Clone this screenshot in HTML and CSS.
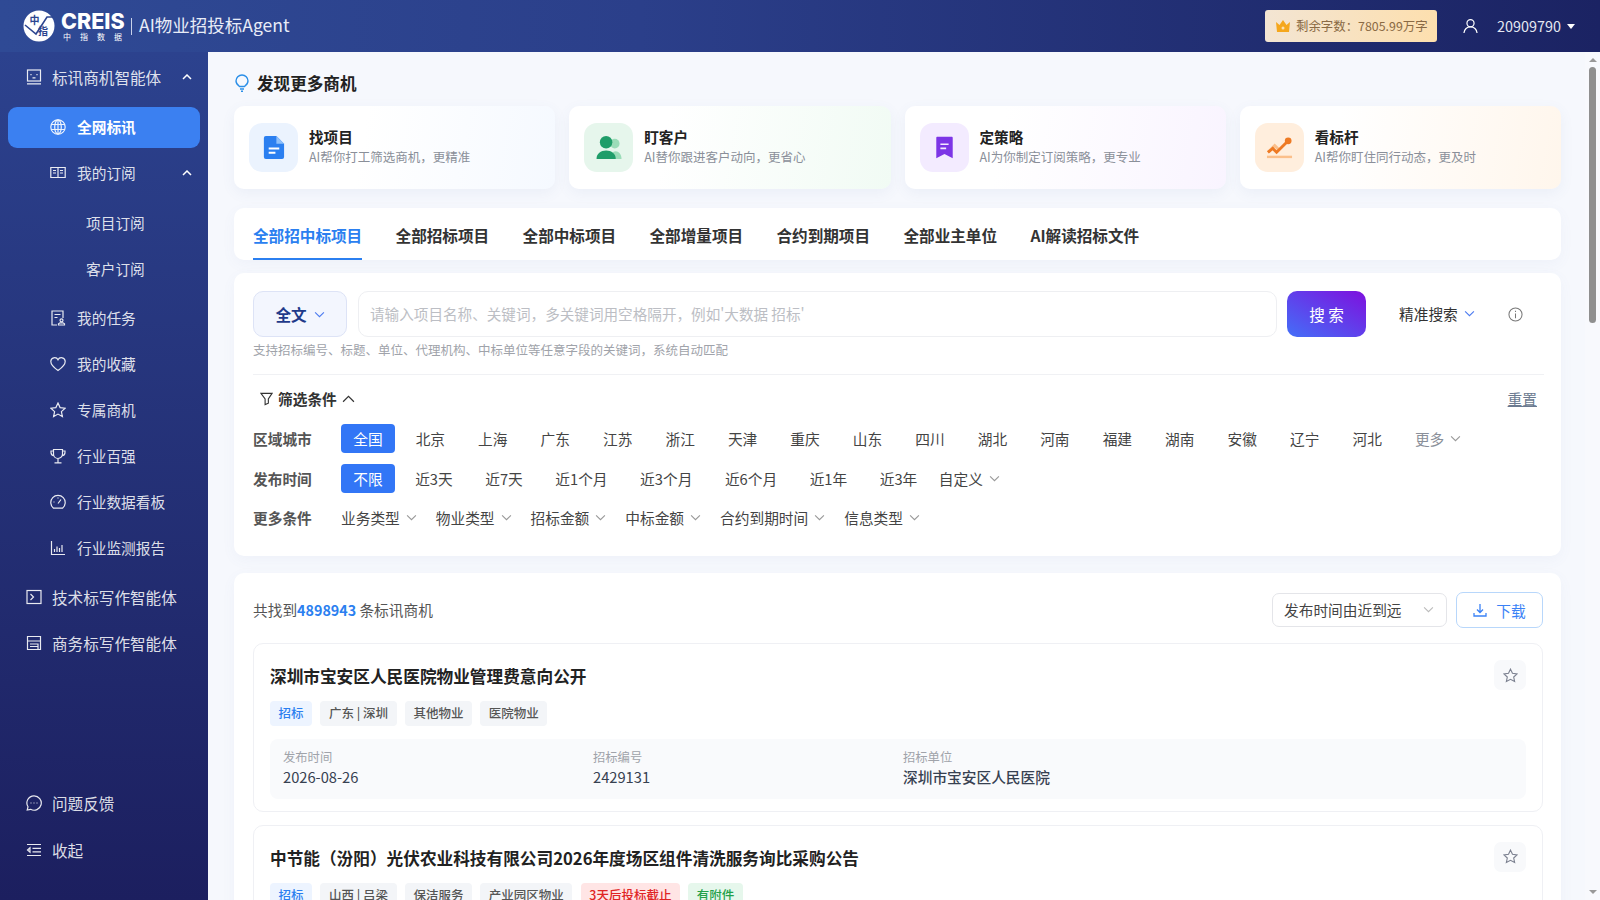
FILE: index.html
```html
<!DOCTYPE html>
<html lang="zh-CN">
<head>
  <meta charset="UTF-8" />
  <title>AI物业招投标Agent</title>
  <link rel="stylesheet" href="styles.css">
</head>
<body>

  <!-- Top bar -->
  <header class="topbar">
    <div class="brand">
      <svg class="brand-mark" viewBox="0 0 32 32">
        <circle cx="16" cy="16" r="15.5" fill="#fff"/>
        <path d="M2 15l11 9L24 7l6 0" fill="none" stroke="#2c4590" stroke-width="1.6"/>
        <text x="6.5" y="14" class="mark-text">中</text>
        <text x="15" y="25" class="mark-text">指</text>
      </svg>
      <div class="brand-word">
        <span class="brand-en">CREIS</span>
        <span class="brand-cn">中指数据</span>
      </div>
      <span class="brand-sep"></span>
      <span class="brand-title">AI物业招投标Agent</span>
    </div>
    <div class="topbar-right">
      <div class="quota">
        <svg class="quota-icon" viewBox="0 0 16 14"><path d="M1 3l3.5 3L8 1l3.500 5L15 3l-1 10H2z" fill="#f5a71c"/><circle cx="8" cy="9" r="1.500" fill="#fde0ae"/></svg>
        <span>剩余字数：7805.99万字</span>
      </div>
      <svg class="user-icon" viewBox="0 0 16 16" fill="none" stroke="#fff" stroke-width="1.300"><circle cx="8" cy="5" r="3.800"/><path d="M1 15.500c.6-4 3.200-6.500 7-6.500s6.400 2.500 7 6.500"/></svg>
      <span class="user-id">20909790</span>
      <span class="caret"></span>
    </div>
  </header>

  <div class="layout">
    <!-- Side menu -->
    <aside class="sidebar">
      <div class="nav-group">
        <div class="nav-item nav-top">
          <svg class="nav-icon" viewBox="0 0 16 16"><rect x="1.500" y="1" width="13" height="11"/><path d="M1 14.800h14M5 5v1.200M11 5v1.200M6.500 8.800h3"/></svg>
          <span>标讯商机智能体</span>
          <svg class="nav-arrow" viewBox="0 0 10 6"><path d="M1 5l4-4 4 4"/></svg>
        </div>
        <div class="nav-item nav-child is-active">
          <svg class="nav-icon" viewBox="0 0 16 16"><circle cx="8" cy="8" r="7.200"/><ellipse cx="8" cy="8" rx="3.300" ry="7.200"/><path d="M8 .8v14.400M1.200 5.500h13.600M1.200 10.500h13.600"/></svg>
          <span>全网标讯</span>
        </div>
        <div class="nav-item nav-child">
          <svg class="nav-icon" viewBox="0 0 16 16"><path d="M.8 2.500h14.400v10H.8zM8 2.500v10M3 5.500h3M3 8h3M10 5.500h3M10 8h3"/></svg>
          <span>我的订阅</span>
          <svg class="nav-arrow" viewBox="0 0 10 6"><path d="M1 5l4-4 4 4"/></svg>
        </div>
        <div class="nav-sub">
          <div class="nav-item nav-leaf">项目订阅</div>
          <div class="nav-item nav-leaf">客户订阅</div>
        </div>
        <div class="nav-item nav-child">
          <svg class="nav-icon" viewBox="0 0 16 16"><path d="M7 15H2V1h11v7M4.500 4.500h6M4.500 7.500h3"/><circle cx="11.500" cy="10.300" r="1.500"/><path d="M8.500 15h6v-1.200l-1.500-1h-3l-1.500 1z"/></svg>
          <span>我的任务</span>
        </div>
        <div class="nav-item nav-child">
          <svg class="nav-icon" viewBox="0 0 16 16"><path d="M8 14.500C3 11 .8 8.500.8 5.500A3.800 3.800 0 0 1 8 3.800a3.800 3.800 0 0 1 7.200 1.700c0 3-2.200 5.500-7.200 9z"/></svg>
          <span>我的收藏</span>
        </div>
        <div class="nav-item nav-child">
          <svg class="nav-icon" viewBox="0 0 16 16"><path d="M8 1l2.100 4.600 5 .6-3.700 3.400 1 5L8 12.100l-4.400 2.500 1-5L.9 6.200l5-.6z"/></svg>
          <span>专属商机</span>
        </div>
        <div class="nav-item nav-child">
          <svg class="nav-icon" viewBox="0 0 16 16"><path d="M3.500 1.500h9v4.500a4.500 4.500 0 0 1-9 0zM3.500 3H1v1.500c0 1.800 1.200 3 3 3.200M12.500 3H15v1.500c0 1.800-1.200 3-3 3.200M8 10.500v4M4.500 14.800h7"/></svg>
          <span>行业百强</span>
        </div>
        <div class="nav-item nav-child">
          <svg class="nav-icon" viewBox="0 0 16 16"><path d="M3.500 14.200a7.200 7.200 0 1 1 9 0zM8 9.500l3-4M3.500 8h1M8 3.500v1"/></svg>
          <span>行业数据看板</span>
        </div>
        <div class="nav-item nav-child">
          <svg class="nav-icon" viewBox="0 0 16 16"><path d="M1.500 1v13.500H15M4.500 12V9M7 12V6.500M9.500 12V8M12 12V5"/></svg>
          <span>行业监测报告</span>
        </div>
      </div>
      <div class="nav-item nav-top">
        <svg class="nav-icon" viewBox="0 0 16 16"><rect x="1" y="1.500" width="14" height="13"/><path d="M4.500 5l3 3-3 3"/></svg>
        <span>技术标写作智能体</span>
      </div>
      <div class="nav-item nav-top">
        <svg class="nav-icon" viewBox="0 0 16 16"><path d="M1.500 1.500h13v13h-13zM1.500 6h13M4 9h8v5.500H4M4 11.500h8"/></svg>
        <span>商务标写作智能体</span>
      </div>
      <div class="sidebar-foot">
        <div class="nav-item nav-top">
          <svg class="nav-icon" viewBox="0 0 16 16"><path d="M8 .8a7.200 7.200 0 1 1-3.400 13.500L1.200 15l.8-3.200A7.200 7.200 0 0 1 8 .8zM4.500 8h1M7.500 8h1M10.500 8h1"/></svg>
          <span>问题反馈</span>
        </div>
        <div class="nav-item nav-top">
          <svg class="nav-icon" viewBox="0 0 16 16"><path d="M1 2.500h14M6.500 6.300H15M6.500 9.800H15M1 13.500h14M4 5.800L1.500 8 4 10.200z"/></svg>
          <span>收起</span>
        </div>
      </div>
    </aside>

    <main class="content">
      <div class="section-title">
        <svg class="bulb" viewBox="0 0 14 18" fill="none" stroke="#2b8fe8" stroke-width="1.400"><path d="M4.500 12.500C2.500 11 1 9.500 1 7a6 6 0 0 1 12 0c0 2.500-1.500 4-3.500 5.500z"/><path d="M5 15h4M6 17.200h2"/></svg>
        <span>发现更多商机</span>
      </div>

      <!-- Feature cards -->
      <div class="feature-row">
        <div class="feature feature-blue">
          <div class="feature-icon">
            <svg viewBox="0 0 24 26"><path d="M4 1h11l8 8v14a2 2 0 0 1-2 2H4a2 2 0 0 1-2-2V3a2 2 0 0 1 2-2z" fill="#2b7ff0"/><path d="M15 1l8 8h-8z" fill="#8fc0fa"/><path d="M7 14h11M7 18.500h7" stroke="#fff" stroke-width="2"/></svg>
          </div>
          <div class="feature-text">
            <div class="feature-name">找项目</div>
            <div class="feature-desc">AI帮你打工筛选商机，更精准</div>
          </div>
        </div>
        <div class="feature feature-green">
          <div class="feature-icon">
            <svg viewBox="0 0 28 26"><circle cx="20" cy="9" r="5" fill="#9bdcb8"/><path d="M15 25c0-5 3-8 6-8s6 3 6 8z" fill="#9bdcb8"/><circle cx="11" cy="7.500" r="6.500" fill="#1f9d69"/><path d="M1 25c0-6 4.500-9 10-9s10 3 10 9z" fill="#1f9d69"/></svg>
          </div>
          <div class="feature-text">
            <div class="feature-name">盯客户</div>
            <div class="feature-desc">AI替你跟进客户动向，更省心</div>
          </div>
        </div>
        <div class="feature feature-purple">
          <div class="feature-icon">
            <svg viewBox="0 0 24 28"><path d="M3 1h18a1 1 0 0 1 1 1v25l-10-5-10 5V2a1 1 0 0 1 1-1z" fill="#7c35e6"/><path d="M7 10h10M7 15h7" stroke="#f3ebff" stroke-width="2"/></svg>
          </div>
          <div class="feature-text">
            <div class="feature-name">定策略</div>
            <div class="feature-desc">AI为你制定订阅策略，更专业</div>
          </div>
        </div>
        <div class="feature feature-orange">
          <div class="feature-icon">
            <svg viewBox="0 0 28 24"><path d="M2 17l7-7 5 5" fill="none" stroke="#fbbf8a" stroke-width="3"/><path d="M2 17l5-4 4 4 11-11" fill="none" stroke="#ee7a24" stroke-width="3"/><circle cx="23" cy="5" r="3.500" fill="#ee7a24"/><rect x="1" y="20.500" width="26" height="2.500" fill="#fbbf8a"/></svg>
          </div>
          <div class="feature-text">
            <div class="feature-name">看标杆</div>
            <div class="feature-desc">AI帮你盯住同行动态，更及时</div>
          </div>
        </div>
      </div>

      <nav class="tabs">
        <a class="tab is-active">全部招中标项目</a>
        <a class="tab">全部招标项目</a>
        <a class="tab">全部中标项目</a>
        <a class="tab">全部增量项目</a>
        <a class="tab">合约到期项目</a>
        <a class="tab">全部业主单位</a>
        <a class="tab">AI解读招标文件</a>
      </nav>

      <!-- Search and filters -->
      <section class="panel search-panel">
        <div class="search-row">
          <div class="scope">全文 <svg class="chev chev-blue" viewBox="0 0 10 6"><path d="M1 1l4 4 4-4"/></svg></div>
          <input class="search-input" placeholder="请输入项目名称、关键词，多关键词用空格隔开，例如'大数据 招标'" />
          <button class="search-btn">搜 索</button>
          <div class="exact">精准搜索 <svg class="chev chev-blue" viewBox="0 0 10 6"><path d="M1 1l4 4 4-4"/></svg></div>
          <svg class="info" viewBox="0 0 16 16" fill="none" stroke="#777" stroke-width="1.100"><circle cx="8" cy="8" r="7"/><path d="M8 7v5M8 4v1.300"/></svg>
        </div>
        <p class="hint">支持招标编号、标题、单位、代理机构、中标单位等任意字段的关键词，系统自动匹配</p>
        <div class="divider"></div>

        <div class="filter-head">
          <div class="filter-title">
            <svg class="funnel" viewBox="0 0 14 14" fill="none" stroke="#333" stroke-width="1.200"><path d="M1 1h12L9 7v4.500L5.500 13V7z"/></svg>
            <span>筛选条件</span>
            <svg class="chev chev-up" viewBox="0 0 12 7"><path d="M1 6l5-5 5 5"/></svg>
          </div>
          <a class="reset">重置</a>
        </div>

        <div class="filter-row">
          <div class="filter-label">区域城市</div>
          <span class="chip is-active">全国</span>
          <span class="chip">北京</span>
          <span class="chip">上海</span>
          <span class="chip">广东</span>
          <span class="chip">江苏</span>
          <span class="chip">浙江</span>
          <span class="chip">天津</span>
          <span class="chip">重庆</span>
          <span class="chip">山东</span>
          <span class="chip">四川</span>
          <span class="chip">湖北</span>
          <span class="chip">河南</span>
          <span class="chip">福建</span>
          <span class="chip">湖南</span>
          <span class="chip">安徽</span>
          <span class="chip">辽宁</span>
          <span class="chip">河北</span>
          <span class="chip chip-more">更多<svg class="chev" viewBox="0 0 10 6"><path d="M1 1l4 4 4-4"/></svg></span>
        </div>
        <div class="filter-row time-row">
          <div class="filter-label">发布时间</div>
          <span class="chip is-active">不限</span>
          <span class="chip">近3天</span>
          <span class="chip">近7天</span>
          <span class="chip">近1个月</span>
          <span class="chip">近3个月</span>
          <span class="chip">近6个月</span>
          <span class="chip">近1年</span>
          <span class="chip">近3年</span>
          <span class="chip chip-drop">自定义<svg class="chev" viewBox="0 0 10 6"><path d="M1 1l4 4 4-4"/></svg></span>
        </div>
        <div class="filter-row more-row">
          <div class="filter-label">更多条件</div>
          <span class="drop">业务类型<svg class="chev" viewBox="0 0 10 6"><path d="M1 1l4 4 4-4"/></svg></span>
          <span class="drop">物业类型<svg class="chev" viewBox="0 0 10 6"><path d="M1 1l4 4 4-4"/></svg></span>
          <span class="drop">招标金额<svg class="chev" viewBox="0 0 10 6"><path d="M1 1l4 4 4-4"/></svg></span>
          <span class="drop">中标金额<svg class="chev" viewBox="0 0 10 6"><path d="M1 1l4 4 4-4"/></svg></span>
          <span class="drop">合约到期时间<svg class="chev" viewBox="0 0 10 6"><path d="M1 1l4 4 4-4"/></svg></span>
          <span class="drop">信息类型<svg class="chev" viewBox="0 0 10 6"><path d="M1 1l4 4 4-4"/></svg></span>
        </div>
      </section>

      <!-- Results -->
      <section class="panel results-panel">
        <div class="results-bar">
          <div class="results-count">共找到<b>4898943</b> 条标讯商机</div>
          <div class="sort">发布时间由近到远<svg class="chev" viewBox="0 0 10 6"><path d="M1 1l4 4 4-4"/></svg></div>
          <button class="download">
            <svg viewBox="0 0 14 14" fill="none" stroke="#3b82f6" stroke-width="1.300"><path d="M7 1v8M4 6.500L7 9.500l3-3M1 10v3h12v-3"/></svg>
            下载
          </button>
        </div>

        <article class="result">
          <div class="result-head">
            <h3>深圳市宝安区人民医院物业管理费意向公开</h3>
            <span class="star-btn"><svg viewBox="0 0 16 16" fill="none" stroke="#7c8190" stroke-width="1.200"><path d="M8 1.200l2.100 4.500 4.900.6-3.600 3.300 1 4.800L8 12.100l-4.400 2.300 1-4.800L1 6.300l4.900-.6z"/></svg></span>
          </div>
          <div class="tags">
            <span class="tag tag-blue">招标</span>
            <span class="tag">广东 | 深圳</span>
            <span class="tag">其他物业</span>
            <span class="tag">医院物业</span>
          </div>
          <div class="result-info">
            <div><div class="info-label">发布时间</div><div class="info-value">2026-08-26</div></div>
            <div><div class="info-label">招标编号</div><div class="info-value">2429131</div></div>
            <div><div class="info-label">招标单位</div><div class="info-value info-strong">深圳市宝安区人民医院</div></div>
          </div>
        </article>

        <article class="result">
          <div class="result-head">
            <h3>中节能（汾阳）光伏农业科技有限公司2026年度场区组件清洗服务询比采购公告</h3>
            <span class="star-btn"><svg viewBox="0 0 16 16" fill="none" stroke="#7c8190" stroke-width="1.200"><path d="M8 1.200l2.100 4.500 4.900.6-3.600 3.300 1 4.800L8 12.100l-4.400 2.300 1-4.800L1 6.300l4.900-.6z"/></svg></span>
          </div>
          <div class="tags">
            <span class="tag tag-blue">招标</span>
            <span class="tag">山西 | 吕梁</span>
            <span class="tag">保洁服务</span>
            <span class="tag">产业园区物业</span>
            <span class="tag tag-red">3天后投标截止</span>
            <span class="tag tag-green">有附件</span>
          </div>
        </article>
      </section>
    </main>

    <!-- Page scrollbar -->
    <div class="scrollbar">
      <span class="scroll-up"></span>
      <span class="scroll-thumb"></span>
      <span class="scroll-down"></span>
    </div>
  </div>

</body>
</html>
```

FILE: styles.css
```css
* {
  box-sizing: border-box;
}

body {
  margin: 0;
  height: 100vh;
  overflow: hidden;
  display: flex;
  flex-direction: column;
  font-family: "Noto Sans CJK SC", "Noto Sans", sans-serif;
  color: #333;
  background: #f6f8fd;
}

/* Top bar */
.topbar {
  height: 52px;
  flex: none;
  display: flex;
  align-items: center;
  justify-content: space-between;
  padding: 0 25px 0 23px;
  background: linear-gradient(90deg, #2f4a95, #2b3f8a 40%, #1b2363);
  color: #fff;
}

.brand {
  display: flex;
  align-items: center;
}

.brand-mark {
  width: 32px;
  height: 32px;
}

.mark-text {
  font-size: 10px;
  font-weight: 700;
  fill: #2c4590;
}

.brand-word {
  display: flex;
  flex-direction: column;
  margin-left: 6px;
  width: 63px;
}

.brand-en {
  font-family: Inter, sans-serif;
  font-size: 21.5px;
  line-height: 20px;
  font-weight: 800;
}

.brand-cn {
  font-size: 8px;
  line-height: 11px;
  letter-spacing: 9px;
  white-space: nowrap;
  padding-left: 2px;
}

.brand-sep {
  width: 1px;
  height: 17px;
  margin: 0 7px;
  background: #c9d2ea;
}

.brand-title {
  padding-bottom: 3px;
  font-size: 17.5px;
  color: #e8ecf7;
}

.topbar-right {
  display: flex;
  align-items: center;
}

.quota {
  width: 172px;
  height: 32px;
  display: flex;
  align-items: center;
  padding-left: 10px;
  border-radius: 3px;
  background: linear-gradient(90deg, #f3e5d3, #fddfae);
  color: #8a6a44;
  font-size: 12.4px;
}

.quota-icon {
  width: 16px;
  height: 14px;
  margin-right: 5px;
}

.user-icon {
  width: 15px;
  height: 16px;
  margin-left: 26px;
}

.user-id {
  margin-left: 19px;
  padding-bottom: 2px;
  font-size: 14.4px;
  color: #e4e7f2;
}

.caret {
  margin-left: 6px;
  border-left: 4px solid transparent;
  border-right: 4px solid transparent;
  border-top: 5px solid #fff;
}

/* Side menu */
.layout {
  flex: 1;
  min-height: 0;
  display: flex;
}

.sidebar {
  width: 208px;
  flex: none;
  display: flex;
  flex-direction: column;
  padding: 0 8px 29px;
  background: linear-gradient(180deg, #2c428e, #1c1f5f);
  color: rgba(255, 255, 255, 0.86);
}

.nav-group {
  margin-bottom: 3px;
}

.nav-item {
  position: relative;
  height: 41px;
  margin-top: 5px;
  padding-bottom: 2px;
  display: flex;
  align-items: center;
  font-size: 14.7px;
  border-radius: 9px;
  white-space: nowrap;
}

.nav-icon {
  width: 16px;
  height: 16px;
  flex: none;
  margin-right: 11px;
  fill: none;
  stroke: #fff;
  stroke-width: 1.2;
  opacity: 0.9;
}

.nav-top {
  padding-left: 18px;
  font-size: 15.6px;
}

.nav-top .nav-icon {
  margin-right: 10px;
}

.nav-child {
  padding-left: 42px;
}

.nav-child.is-active {
  margin-top: 9px;
  background: #3b80f1;
  color: #fff;
  font-weight: 700;
}

.nav-sub {
  margin: 9px 0 8px;
}

.nav-leaf {
  padding-left: 78px;
}

.nav-arrow {
  position: absolute;
  right: 8px;
  top: 17px;
  width: 10px;
  height: 6px;
  fill: none;
  stroke: #fff;
  stroke-width: 1.5;
}

.sidebar-foot {
  margin-top: auto;
  display: flex;
  flex-direction: column;
  gap: 1px;
}

/* Main column */
.content {
  flex: 1;
  min-width: 0;
  overflow: hidden;
  padding: 20px 24px 0 26px;
}

.section-title {
  height: 24px;
  padding-bottom: 2px;
  display: flex;
  align-items: center;
  font-size: 16.6px;
  font-weight: 700;
  color: #222;
}

.bulb {
  width: 14px;
  height: 18px;
  margin: 0 8px 0 1px;
}

.feature-row {
  margin-top: 10px;
  display: grid;
  grid-template-columns: repeat(4, 1fr);
  gap: 14px;
}

.feature {
  height: 83px;
  display: flex;
  align-items: center;
  padding-left: 15px;
  border-radius: 10px;
  box-shadow: 0 4px 14px rgba(90, 110, 170, 0.07);
}

.feature-icon {
  width: 49px;
  height: 49px;
  margin-right: 11px;
  flex: none;
  display: flex;
  align-items: center;
  justify-content: center;
  border-radius: 13px;
}

.feature-icon svg {
  width: 25px;
  height: 25px;
}

.feature-green .feature-icon svg {
  width: 28px;
}

.feature-purple .feature-icon svg {
  height: 23px;
}

.feature-orange .feature-icon svg {
  width: 27px;
}

.feature-text {
  padding-bottom: 2px;
}

.feature-blue {
  background: linear-gradient(100deg, #fff 40%, #f5f9ff);
}

.feature-blue .feature-icon {
  background: #ebf3fe;
}

.feature-green {
  background: linear-gradient(100deg, #fff 30%, #f1fbf4);
}

.feature-green .feature-icon {
  background: #e6f6ec;
}

.feature-purple {
  background: linear-gradient(100deg, #fff 30%, #f9f4ff);
}

.feature-purple .feature-icon {
  background: #f3ebff;
}

.feature-orange {
  background: linear-gradient(100deg, #fff 30%, #fff6ec);
}

.feature-orange .feature-icon {
  background: #ffeedd;
}

.feature-name {
  font-size: 14.6px;
  line-height: 20px;
  font-weight: 700;
  color: #222;
}

.feature-desc {
  font-size: 12.5px;
  line-height: 20px;
  color: #8a8f99;
}

.tabs {
  margin-top: 19px;
  height: 52px;
  display: flex;
  gap: 33.4px;
  padding: 0 19px;
  border-radius: 10px;
  background: #fff;
  box-shadow: 0 4px 14px rgba(90, 110, 170, 0.05);
}

.tab {
  display: flex;
  align-items: center;
  padding-top: 3px;
  font-size: 15.6px;
  font-weight: 700;
  color: #333;
  border-bottom: 2px solid transparent;
}

.tab.is-active {
  color: #2b7ff0;
  border-bottom-color: #2b7ff0;
}

.panel {
  border-radius: 10px;
  background: #fff;
  box-shadow: 0 4px 14px rgba(90, 110, 170, 0.05);
}

/* Search and filters */
.search-panel {
  margin-top: 13px;
  padding: 18px 17px 23px 19px;
}

.search-row {
  height: 46px;
  display: flex;
  align-items: center;
}

.scope {
  width: 94px;
  height: 46px;
  flex: none;
  display: flex;
  align-items: center;
  justify-content: center;
  gap: 7px;
  border: 1px solid #dde3f6;
  border-radius: 10px;
  background: #f3f6fe;
  color: #1f3a8a;
  font-size: 15.6px;
  font-weight: 700;
}

.search-input {
  width: 919px;
  height: 46px;
  flex: none;
  margin-left: 11px;
  padding: 0 11px 2px;
  border: 1px solid #eeeff2;
  border-radius: 10px;
  font-family: inherit;
  font-size: 14.6px;
  outline: none;
}

.search-input::placeholder {
  color: #bcbec4;
}

.search-btn {
  width: 79px;
  height: 46px;
  flex: none;
  margin-left: 10px;
  border: 0;
  border-radius: 10px;
  background: linear-gradient(to right top, #436ff8, #7e10de);
  color: #fff;
  font-family: inherit;
  font-size: 15.6px;
}

.exact {
  margin-left: 33px;
  padding-bottom: 2px;
  display: flex;
  align-items: center;
  gap: 6px;
  font-size: 14.7px;
  color: #333;
}

.info {
  width: 15px;
  height: 15px;
  margin-left: 33px;
}

.hint {
  margin: 4px 0 0;
  font-size: 12.5px;
  line-height: 18px;
  color: #a0a3aa;
}

.divider {
  height: 1px;
  margin-top: 15px;
  background: #f0f1f4;
}

.filter-head {
  height: 24px;
  margin-top: 13px;
  padding: 0 7px 3px;
  display: flex;
  align-items: center;
  justify-content: space-between;
}

.filter-title {
  display: flex;
  align-items: center;
  font-size: 14.7px;
  font-weight: 700;
  color: #333;
}

.funnel {
  width: 13px;
  height: 14px;
  margin-right: 5px;
}

.reset {
  font-size: 14.7px;
  color: #6b7a90;
  text-decoration: underline;
}

.filter-row {
  margin-top: 11px;
  height: 29px;
  display: flex;
  align-items: center;
  font-size: 14.7px;
  color: #444;
}

.filter-head + .filter-row {
  margin-top: 12px;
}

.filter-label {
  width: 88px;
  flex: none;
  font-weight: 700;
  color: #555;
}

.chip {
  height: 29px;
  display: flex;
  align-items: center;
  padding: 0 12.2px;
  margin-right: 8.7px;
  border-radius: 4px;
  white-space: nowrap;
}

.time-row .chip {
  margin-right: 8.2px;
}

.chip.is-active {
  background: #3276f6;
  color: #fff;
}

.chip-more {
  color: #8a8f99;
}

.chip-drop {
  margin-left: -11px;
}

.more-row {
  padding-bottom: 2px;
}

.chev {
  width: 11px;
  height: 7px;
  margin-left: 6px;
  flex: none;
  fill: none;
  stroke: #999;
  stroke-width: 1;
}

.chev-blue {
  margin-left: 0;
  stroke: #4d7cf0;
}

.chev-up {
  width: 13px;
  height: 8px;
  margin-left: 5px;
  stroke: #333;
  stroke-width: 1.1;
}

.drop {
  display: flex;
  align-items: center;
  margin-right: 19px;
  white-space: nowrap;
}

/* Results */
.results-panel {
  margin-top: 17px;
  padding: 19px 18px 30px 19px;
}

.results-bar {
  height: 36px;
  display: flex;
  align-items: center;
  font-size: 14.7px;
}

.results-count {
  margin-right: auto;
  padding-bottom: 2px;
  color: #555;
}

.results-count b {
  color: #2b7ff0;
  font-size: 14.3px;
  font-weight: 700;
}

.sort {
  width: 175px;
  height: 34px;
  display: flex;
  align-items: center;
  justify-content: space-between;
  padding: 0 12px 2px 11px;
  border: 1px solid #e4e5e9;
  border-radius: 7px;
  color: #444;
}

.sort .chev {
  stroke: #bbb;
}

.download {
  width: 87px;
  height: 36px;
  margin-left: 9px;
  display: flex;
  align-items: center;
  justify-content: center;
  gap: 9px;
  border: 1px solid #b8d7fb;
  border-radius: 7px;
  background: #fff;
  color: #3b82f6;
  font-family: inherit;
  font-size: 14.7px;
}

.download svg {
  width: 14px;
  height: 14px;
}

.result {
  margin-top: 15px;
  padding: 16px 16px 12px 16px;
  border: 1px solid #eff0f4;
  border-radius: 10px;
}

.result + .result {
  margin-top: 12.5px;
}

.result-head {
  height: 30px;
  display: flex;
  align-items: center;
  justify-content: space-between;
}

.result-head h3 {
  margin: 2px 0 0;
  font-size: 16.67px;
  font-weight: 700;
  color: #222;
}

.star-btn {
  width: 32px;
  height: 30px;
  display: flex;
  align-items: center;
  justify-content: center;
  border-radius: 7px;
  background: #f8f9fb;
}

.star-btn svg {
  width: 15px;
  height: 15px;
}

.tags {
  margin-top: 11px;
  display: flex;
  gap: 8.4px;
}

.tag {
  height: 25px;
  display: flex;
  align-items: center;
  padding: 0 8.5px 2px;
  border-radius: 4px;
  background: #f3f5f8;
  color: #555;
  font-size: 12.5px;
  font-weight: 500;
}

.tag-blue {
  background: #edf4ff;
  color: #2b7ff0;
}

.tag-red {
  background: #ffe5e5;
  color: #e02424;
}

.tag-green {
  background: #e6f7ec;
  color: #22a04a;
}

.result-info {
  margin-top: 12.5px;
  display: grid;
  grid-template-columns: 310px 310px 1fr;
  padding: 8px 13px;
  height: 60.5px;
  border-radius: 8px;
  background: #f9fafc;
}

.info-label {
  font-size: 12.3px;
  line-height: 20px;
  color: #a0a3aa;
}

.info-value {
  font-size: 14.7px;
  line-height: 20px;
  color: #374151;
}

.info-strong {
  font-weight: 500;
}

/* Scrollbar column, drawn */
.scrollbar {
  width: 15px;
  flex: none;
  display: flex;
  flex-direction: column;
  align-items: center;
  background: #f8f9fd;
}

.scroll-up {
  margin-top: 6px;
  border-left: 4px solid transparent;
  border-right: 4px solid transparent;
  border-bottom: 4px solid #999;
}

.scroll-thumb {
  width: 7px;
  height: 256px;
  margin-top: 5px;
  border-radius: 4px;
  background: #8f8f8f;
}

.scroll-down {
  margin-top: auto;
  margin-bottom: 6px;
  border-left: 4px solid transparent;
  border-right: 4px solid transparent;
  border-top: 4px solid #999;
}
```
